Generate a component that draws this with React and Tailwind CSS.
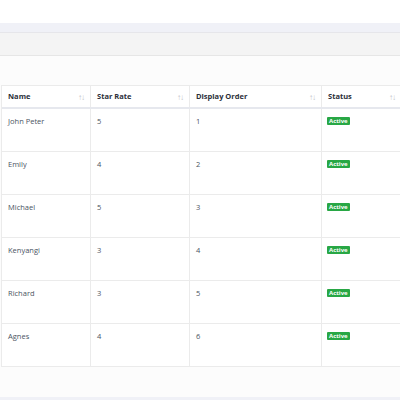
import React from "react";

const rows = [
  { name: "John Peter", rate: 5, order: 1 },
  { name: "Emily", rate: 4, order: 2 },
  { name: "Michael", rate: 5, order: 3 },
  { name: "Kenyangi", rate: 3, order: 4 },
  { name: "Richard", rate: 3, order: 5 },
  { name: "Agnes", rate: 4, order: 6 },
];

function SortIcon() {
  return <span className="text-[8px] text-[#bfc3c9] tracking-[-1px]">↑↓</span>;
}

function HeadCell({ label, width }) {
  return (
    <div className={`${width} flex items-center justify-between px-[6px] border-r border-[#ebebeb]`}>
      <span className="font-bold text-[#2b2f3a]">{label}</span>
      <SortIcon />
    </div>
  );
}

export default function App() {
  return (
    <div
      className="w-[400px] h-[400px] overflow-hidden bg-[#fcfcfc]"
      style={{ fontFamily: '"Open Sans", "Liberation Sans", sans-serif' }}
    >
      <div className="h-[23px] bg-white" />
      <div className="h-[10px] bg-[#f0f1f7] border-b border-[#e6e6ea]" />
      <div className="h-[23px] bg-[#f4f4f4] border-b border-[#e6e6e6]" />
      <div className="h-[29px]" />

      {/* Table */}
      <div className="ml-[1px] w-[420px] border-t border-l border-[#ebebeb] bg-white text-[7.5px]">
        <div className="flex h-[23px] border-b-2 border-[#e6e8ee]">
          <HeadCell label="Name" width="w-[89px]" />
          <HeadCell label="Star Rate" width="w-[99px]" />
          <HeadCell label="Display Order" width="w-[132px]" />
          <div className="w-[79px] flex items-center justify-between px-[6px]">
            <span className="font-bold text-[#2b2f3a]">Status</span>
            <SortIcon />
          </div>
        </div>
        {rows.map((r) => (
          <div key={r.name} className="flex h-[43px] border-b border-[#ebebeb] text-[#4a5463]">
            <div className="w-[89px] px-[6px] pt-[7px] border-r border-[#ebebeb]">{r.name}</div>
            <div className="w-[99px] px-[6px] pt-[7px] border-r border-[#ebebeb]">{r.rate}</div>
            <div className="w-[132px] px-[6px] pt-[7px] border-r border-[#ebebeb]">{r.order}</div>
            <div className="w-[79px] px-[5px] pt-[6px]">
              <span className="inline-block bg-[#28a745] text-white font-bold text-[6px] leading-[8px] px-[2px] rounded-[1px]">
                Active
              </span>
            </div>
          </div>
        ))}
      </div>

      <div className="h-[30px]" />
      <div className="h-[4px] bg-[#f0f1f7]" />
    </div>
  );
}
